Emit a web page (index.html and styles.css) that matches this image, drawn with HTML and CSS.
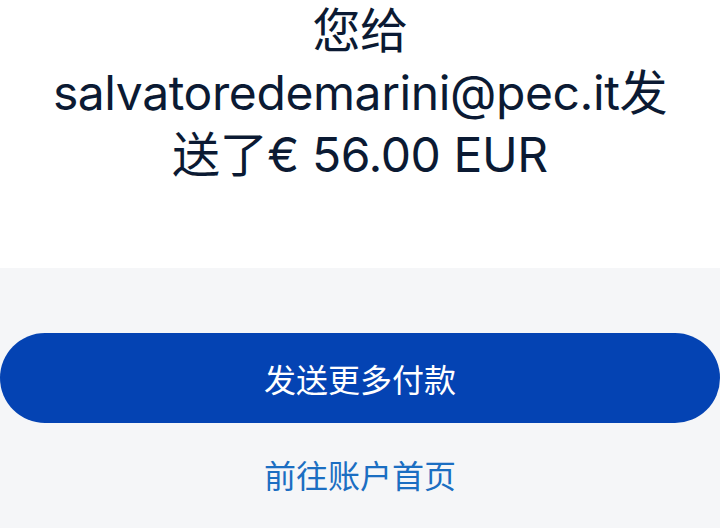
FILE: index.html
```html
<!DOCTYPE html>
<html lang="zh-CN">
<head>
  <meta charset="UTF-8">
  <meta name="viewport" content="width=device-width, initial-scale=1.0">
  <title>付款已发送</title>
  <link rel="stylesheet" href="styles.css">
</head>
<body>
  <div class="summary">
    <h1 class="summary-title">您给 salvatoredemarini@pec.it发送了€ 56.00 EUR</h1>
  </div>

  <div class="actions">
    <a href="#" class="btn-primary">发送更多付款</a>
    <a href="#" class="link">前往账户首页</a>
  </div>
</body>
</html>
```

FILE: styles.css
```css
html, body {
  margin: 0;
  padding: 0;
}
body {
  font-family: Inter, "Noto Sans CJK SC", sans-serif;
  background: #f5f6f8;
  width: 720px;
  height: 528px;
  overflow: hidden;
}
.summary {
  background: #fff;
  height: 268px;
  padding: 0 46px;
  box-sizing: border-box;
}
.summary-title {
  margin: 0;
  font-size: 48px;
  line-height: 62px;
  font-weight: 400;
  letter-spacing: -0.4px;
  color: #0b1a33;
  text-align: center;
}
.actions {
  display: flex;
  flex-direction: column;
  align-items: center;
  padding-top: 65px;
}
.btn-primary {
  display: flex;
  align-items: center;
  justify-content: center;
  width: 720px;
  height: 90px;
  border-radius: 45px;
  background: #0443b3;
  color: #fff;
  font-size: 32px;
  text-decoration: none;
}
.link {
  margin-top: 32px;
  font-size: 32px;
  line-height: 44px;
  color: #1b6ec2;
  text-decoration: none;
}
```
